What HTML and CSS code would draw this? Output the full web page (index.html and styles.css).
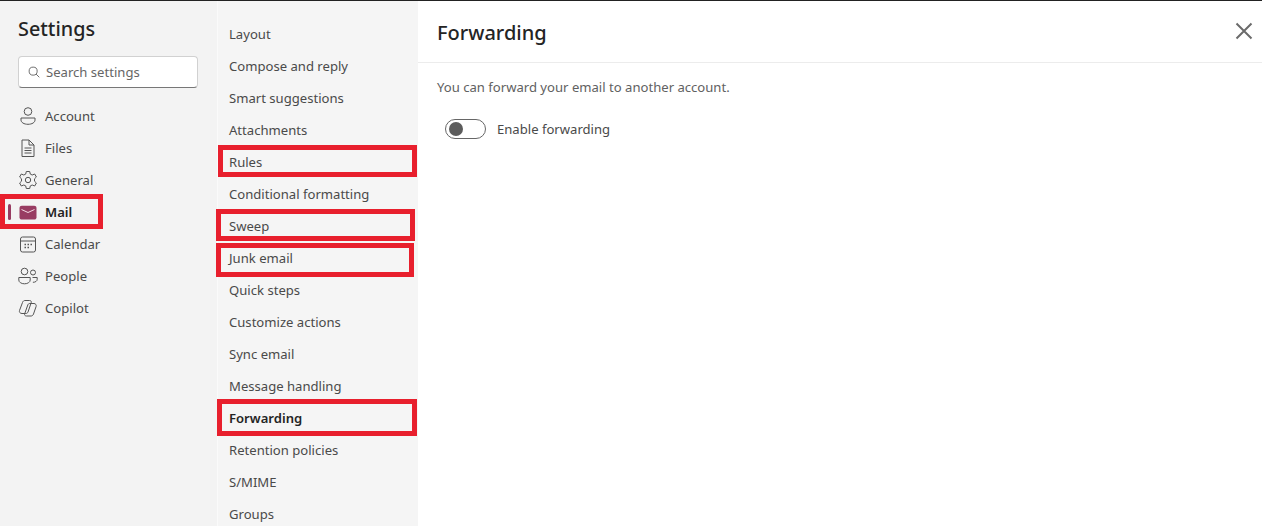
FILE: index.html
```html
<!DOCTYPE html>
<html lang="en">
<head>
  <meta charset="UTF-8">
  <title>Settings</title>
  <link rel="stylesheet" href="styles.css">
</head>
<body>
  <div class="app">
    <aside class="side">
      <h1>Settings</h1>
      <div class="search">
        <svg class="search-icon" width="12" height="12" viewBox="0 0 14 14"><circle cx="6" cy="6" r="4.700"/><path d="M9.400 9.400l3.800 3.800"/></svg>
        <span>Search settings</span>
      </div>
      <ul class="nav">
        <li>
          <svg viewBox="0 0 20 20"><circle cx="10" cy="5.500" r="3.800"/><path d="M3 12h14v2c0 2.500-3 4.300-7 4.300s-7-1.800-7-4.300z"/></svg>
          Account
        </li>
        <li>
          <svg viewBox="0 0 20 20"><path d="M4 2h7l5 5v11.500H4z"/><path d="M11 2v5h5M6.500 10h7M6.500 12.500h7M6.500 15h7"/></svg>
          Files
        </li>
        <li>
          <svg viewBox="0 0 20 20"><circle cx="10" cy="10" r="2.700"/><path d="M8.300 1.500h3.400l.6 2.600 1.900.9 2.500-1 1.700 3-1.900 1.800v2.400l1.900 1.800-1.700 3-2.500-1-1.900.9-.6 2.600H8.300l-.6-2.600-1.900-.9-2.500 1-1.700-3 1.900-1.800V8.800L1.600 7l1.700-3 2.500 1 1.900-.9z"/></svg>
          General
        </li>
        <li class="active">
          <span class="bar"></span>
          <svg viewBox="0 0 20 20"><path class="fill" d="M1.500 6c0-1.400 1-2.300 2.300-2.300h12.400c1.300 0 2.300.9 2.300 2.300v9.200c0 1.400-1 2.300-2.300 2.300H3.800c-1.300 0-2.300-.9-2.300-2.300z"/><path class="flap" d="M3.500 7.500l6.500 3 6.500-3"/></svg>
          Mail
          <span class="mark mark-mail"></span>
        </li>
        <li>
          <svg viewBox="0 0 20 20"><rect x="2.500" y="3" width="15" height="15" rx="2"/><path d="M2.500 7h15"/><path class="dots" d="M6.500 10.500h1.500M9.500 10.500H11M12.500 10.500H14M6.500 13.500h1.500M9.500 13.500H11"/></svg>
          Calendar
        </li>
        <li>
          <svg viewBox="0 0 20 20"><circle cx="6.500" cy="5.500" r="3.300"/><circle cx="15" cy="6.500" r="2.500"/><path d="M.8 11.500h11.400v2.500c0 2.200-2.500 3.800-5.700 3.800S.8 16.200.8 14zM14.500 11.500h4.700v1.800c0 1.800-1.800 3-4.300 3"/></svg>
          People
        </li>
        <li>
          <svg viewBox="0 0 20 20"><path d="M7 2.500h4.500c1.500 0 2.100 1 1.700 2.200L10 14c-.4 1-1.200 1.500-2.200 1.500H4c-2 0-3-1.500-2.500-3L4.500 4.500C5 3 6 2.500 7 2.500z"/><path d="M11.800 5.500h4.200c1.600 0 2.600 1.500 2.100 3L15.500 16c-.5 1.500-1.500 2-2.500 2H8.500c-1.500 0-2.300-1-1.800-2.300L9.800 7c.3-1 1-1.500 2-1.500z"/></svg>
          Copilot
        </li>
      </ul>
    </aside>

    <nav class="sub">
      <ul>
        <li>Layout</li>
        <li>Compose and reply</li>
        <li>Smart suggestions</li>
        <li>Attachments</li>
        <li>Rules<span class="mark mark-rules"></span></li>
        <li>Conditional formatting</li>
        <li>Sweep<span class="mark mark-sweep"></span></li>
        <li>Junk email<span class="mark mark-junk"></span></li>
        <li>Quick steps</li>
        <li>Customize actions</li>
        <li>Sync email</li>
        <li>Message handling</li>
        <li class="current">Forwarding<span class="mark mark-fwd"></span></li>
        <li>Retention policies</li>
        <li>S/MIME</li>
        <li>Groups</li>
      </ul>
    </nav>

    <main class="content">
      <header class="head">
        <h2>Forwarding</h2>
        <svg class="close" width="18" height="18" viewBox="0 0 18 18"><path d="M1.500 1.500l15 15M16.500 1.500l-15 15"/></svg>
      </header>
      <div class="body">
        <p>You can forward your email to another account.</p>
        <div class="row">
          <span class="toggle"><span class="knob"></span></span>
          <span>Enable forwarding</span>
        </div>
      </div>
    </main>
  </div>
</body>
</html>
```

FILE: styles.css
```css
*{
  margin: 0; padding: 0;
  box-sizing: border-box;
}
html, body{
  height: 100%;
  overflow: hidden;
}
body{
  font-family: "Noto Sans", "Open Sans", sans-serif;
  font-size: 13.1px;
  color: #4a4a4a;
  background: #fff;
}
ul{
  list-style: none;
}
.app{
  display: flex;
  height: 526px;
  border-top: 1px solid #222;
}

/* left column */
.side{
  width: 217px;
  flex-shrink: 0;
  background: #f3f3f3;
  padding: 13px 19px 0 18px;
}
h1{
  font-size: 19.8px;
  font-weight: 500;
  line-height: 30px;
  color: #242424;
}
.search{
  display: flex;
  align-items: center;
  gap: 6px;
  height: 32px;
  margin-top: 12px;
  padding-left: 9px;
  background: #fff;
  border: 1px solid #d1d1d1;
  border-bottom-color: #777;
  border-radius: 4px;
  color: #666;
}
.search-icon{
  fill: none;
  stroke: #666;
  stroke-width: 1.100;
}
.nav{
  margin-top: 12px;
}
.nav li{
  position: relative;
  display: flex;
  align-items: center;
  gap: 7px;
  height: 32px;
}
.nav svg{
  width: 20px;
  height: 20px;
  fill: none;
  stroke: #555;
  stroke-width: 1;
}
.nav .active{
  font-weight: 600;
  color: #242424;
}
.nav .active svg .fill{
  fill: #983c62;
  stroke: none;
}
.nav .active svg .flap{
  stroke: #f3dce5;
}
.nav svg .dots{
  stroke-width: 1.500;
}
.bar{
  position: absolute;
  left: -10px;
  top: 8px;
  width: 3px;
  height: 16px;
  border-radius: 2px;
  background: #983c62;
}

/* middle column */
.sub{
  width: 201px;
  flex-shrink: 0;
  background: #f5f5f5;
  border-left: 1px solid #fafafa;
  padding: 17px 0 0 11px;
}
.sub li{
  position: relative;
  height: 32px;
  line-height: 32px;
}
.sub .current{
  font-weight: 600;
  color: #242424;
}

/* red annotation boxes, drawn over the rows */
.mark{
  position: absolute;
  border: 5px solid #e81f2d;
  pointer-events: none;
}
.mark-mail{ left: -18px; top: -2px; width: 103px; height: 35px; }
.mark-rules{ left: -11px; top: -1px; width: 199px; height: 32px; }
.mark-sweep{ left: -13px; top: -1px; width: 199px; height: 32px; }
.mark-junk{ left: -13px; top: 1px; width: 198px; height: 34px; }
.mark-fwd{ left: -12px; top: -3px; width: 200px; height: 37px; }

/* right column */
.content{
  flex: 1;
}
.head{
  display: flex;
  justify-content: space-between;
  align-items: center;
  height: 62px;
  padding: 0 9px 0 19px;
  border-bottom: 1px solid #ececec;
}
h2{
  margin-top: 2px;
  font-size: 20px;
  font-weight: 500;
  color: #242424;
}
.close{
  margin-bottom: 2px;
  fill: none;
  stroke: #6b6b6b;
  stroke-width: 2;
}
.body{
  padding: 14px 19px;
}
.body p{
  line-height: 20px;
  color: #616161;
}
.row{
  display: flex;
  align-items: center;
  gap: 11px;
  margin-top: 22px;
  margin-left: 8px;
}
.toggle{
  display: flex;
  align-items: center;
  width: 41px;
  height: 20px;
  padding-left: 3px;
  border: 1px solid #666;
  border-radius: 10px;
}
.knob{
  width: 14px;
  height: 14px;
  border-radius: 50%;
  background: #5c5c5c;
}
```
